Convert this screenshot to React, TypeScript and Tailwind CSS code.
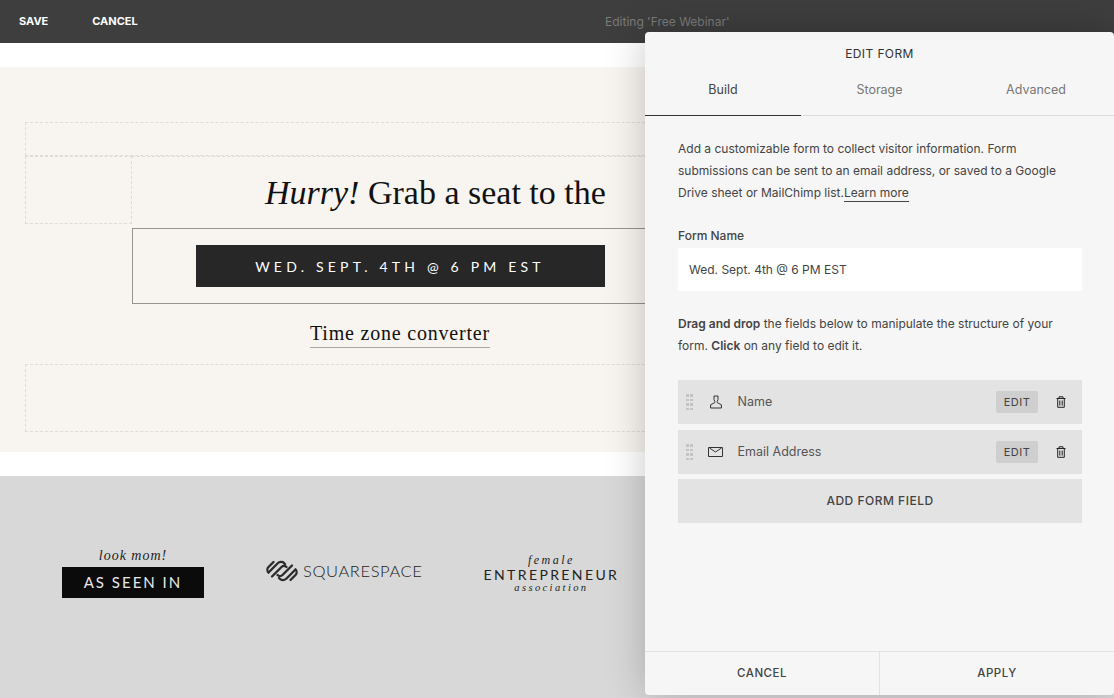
import React from "react";

const ui = "font-['Inter',sans-serif]";

const TrashIcon = () => (
  <svg width="10" height="12" viewBox="0 0 10 12" fill="none" stroke="#222" strokeWidth="1">
    <path d="M0.5 2.5H9.5M3 2.5V0.8H7V2.5M1.7 2.5V11.3H8.3V2.5M3.8 4.5V9.6M6.2 4.5V9.6" />
  </svg>
);

const UserIcon = () => (
  <svg width="12" height="14" viewBox="0 0 12 14" fill="none" stroke="#333" strokeWidth="1">
    <path d="M4 1H8V4.5L7.2 6.5V7.6L11.4 9.8V13H0.6V9.8L4.8 7.6V6.5L4 4.5Z" />
  </svg>
);

const MailIcon = () => (
  <svg width="15" height="10" viewBox="0 0 15 10" fill="none" stroke="#333" strokeWidth="1">
    <path d="M0.5 0.5H14.5V9.5H0.5ZM1.5 1L7.5 5L13.5 1" />
  </svg>
);

const DragDots = () => (
  <div className="grid grid-cols-2 gap-x-[1.5px] gap-y-[2px]">
    {Array.from({ length: 8 }).map((_, i) => (
      <span key={i} className="h-[2.5px] w-[2.5px] bg-[#c4c4c4]" />
    ))}
  </div>
);

const SquarespaceMark = () => (
  <svg width="32" height="24" viewBox="0 0 32 24" fill="none" stroke="#2b2b2b" strokeWidth="2.3" strokeLinecap="round">
    <path d="M2.5 13.5L11.5 4.5C13.5 2.5 16.5 2.5 18 4L19 5" />
    <path d="M6 17.5L15.5 8C17 6.5 19 6.5 20.5 8" />
    <path d="M2.5 13.5C1 12 1 9.5 2.5 8L7.5 3" />
    <path d="M29.5 10.5L20.5 19.5C18.5 21.5 15.5 21.5 14 20L13 19" />
    <path d="M26 6.5L16.5 16C15 17.5 13 17.5 11.5 16" />
    <path d="M29.5 10.5C31 12 31 14.5 29.5 16L24.5 21" />
  </svg>
);

const FieldRow = ({ icon, label, className }: any) => (
  <div className={`flex items-center bg-[#e3e3e3] pl-[8px] pr-[16px] ${className}`}>
    <DragDots />
    <div className="flex w-[22px] ml-[12px] justify-center">{icon}</div>
    <span className="ml-[11px] flex-1 text-[12.5px] text-[#555]">{label}</span>
    <span className="flex h-[22px] w-[42px] items-center justify-center rounded-[2px] bg-[#cfcfcf] text-[11px] tracking-[0.5px] text-[#444]">
      EDIT
    </span>
    <span className="ml-[18px] flex">
      <TrashIcon />
    </span>
  </div>
);

const EditPanel = () => (
  <div className={`absolute left-[645px] top-[32px] flex h-[663px] w-[469px] flex-col rounded-[4px] bg-[#f6f6f6] shadow-[0_0_40px_rgba(0,0,0,0.22)] ${ui}`}>
    <div className="pt-[14px] text-center text-[12px] leading-[16px] tracking-[0.4px] text-[#333]">
      EDIT FORM
    </div>
    <div className="mt-[7px] flex h-[47px] border-b border-[#dcdcdc] text-[12.5px] text-[#777]">
      <div className="-mb-px flex w-[156px] items-center justify-center border-b border-[#333] pb-[3px] text-[#444]">
        Build
      </div>
      <div className="flex w-[157px] items-center justify-center pb-[3px]">Storage</div>
      <div className="flex w-[156px] items-center justify-center pb-[3px]">Advanced</div>
    </div>

    <div className="flex-1 px-[33px] pr-[32px] pt-[22px]">
      <p className="text-[12px] leading-[22px] text-[#444]">
        Add a customizable form to collect visitor information. Form
        <br />
        submissions can be sent to an email address, or saved to a Google
        <br />
        Drive sheet or MailChimp list.
        <span className="border-b border-[#444] pb-[1px]">Learn more</span>
      </p>
      <div className="mt-[24px] text-[12px] font-medium leading-[16px] text-[#444]">Form Name</div>
      <div className="mt-[4px] flex h-[43px] items-center bg-white pl-[11px] text-[12px] text-[#444]">
        Wed. Sept. 4th @ 6 PM EST
      </div>
      <p className="mt-[22px] text-[12px] leading-[22px] text-[#444]">
        <span className="font-semibold">Drag and drop</span> the fields below to manipulate the structure of your
        <br />
        form. <span className="font-semibold">Click</span> on any field to edit it.
      </p>
      <div className="mt-[23px] flex flex-col">
        <FieldRow className="h-[44px]" icon={<UserIcon />} label="Name" />
        <FieldRow className="mt-[6px] h-[44px]" icon={<MailIcon />} label="Email Address" />
        <div className="mt-[5px] flex h-[44px] items-center justify-center bg-[#e3e3e3] text-[12px] font-medium tracking-[0.5px] text-[#444]">
          ADD FORM FIELD
        </div>
      </div>
    </div>

    <div className="flex h-[44px] border-t border-[#e2e2e2] text-[11.5px] font-medium tracking-[0.5px] text-[#444]">
      <div className="flex w-[235px] items-center justify-center border-r border-[#e2e2e2]">CANCEL</div>
      <div className="flex flex-1 items-center justify-center">APPLY</div>
    </div>
  </div>
);

const Hero = () => (
  <div className="mt-[24px] h-[385px] bg-[#f8f4ef] pl-[25px] pt-[55px] font-['Liberation_Serif',serif]">
    <div className="h-[34px] w-[700px] border border-dashed border-[#dfdcd7]" />
    <div className="flex">
      <div className="h-[68px] w-[107px] shrink-0 border border-dashed border-[#dfdcd7]" />
      <div className="h-[68px] w-[600px] whitespace-nowrap border-t border-dashed border-[#dfdcd7] pl-[133px] pt-[16px] text-[34px] leading-[40px] text-[#111]">
        <em>Hurry!</em> Grab a seat to the
      </div>
    </div>
    <div className="ml-[107px] mt-[4px] flex h-[76px] w-[536px] items-center justify-center border border-[#97938d]">
      <div className={`flex h-[42px] w-[409px] items-center justify-center bg-[#272727] font-['Lato',sans-serif] text-[14px] tracking-[4.2px] text-white`}>
        WED. SEPT. 4TH @ 6 PM EST
      </div>
    </div>
    <div className="ml-[285px] mt-[16px] w-fit border-b border-[#a9a6a1] pb-[1px] text-[20px] leading-[26px] tracking-[0.8px] text-[#111]">
      Time zone converter
    </div>
    <div className="mt-[16px] h-[68px] w-[700px] border border-dashed border-[#dfdcd7]" />
  </div>
);

const LogoStrip = () => (
  <div className="mt-[24px] flex h-[222px] items-start bg-[#d8d8d8] pl-[62px] pt-[69px]">
    <div className="flex w-[142px] flex-col items-center">
      <div className="font-['Liberation_Serif',serif] text-[14px] italic leading-[22px] tracking-[1px] text-[#222]">
        look mom!
      </div>
      <div className="flex h-[31px] w-[142px] items-center justify-center bg-[#0b0b0b] font-['Lato',sans-serif] text-[15px] tracking-[2px] text-[#e8e8e8]">
        AS SEEN IN
      </div>
    </div>
    <div className="ml-[62px] mt-[14px] flex items-center gap-[5px]">
      <SquarespaceMark />
      <span className="font-['Lato',sans-serif] text-[16.5px] font-light tracking-[0.6px] text-[#222]">SQUARESPACE</span>
    </div>
    <div className="ml-[61px] mt-[9px] flex flex-col items-center font-['Liberation_Serif',serif] text-[#222]">
      <span className="text-[12px] italic leading-[12px] tracking-[2.5px]">female</span>
      <span className="font-['Lato',sans-serif] text-[14px] leading-[17px] tracking-[2.4px]">ENTREPRENEUR</span>
      <span className="text-[10.5px] italic leading-[10px] tracking-[2.4px]">association</span>
    </div>
  </div>
);

export default function App() {
  return (
    <div className="relative h-[698px] w-[1114px] overflow-hidden bg-white">
      <div className={`relative flex h-[43px] items-center bg-[#3e3e3e] pl-[19px] text-[11px] font-bold text-white ${ui}`}>
        <span>SAVE</span>
        <span className="ml-[44px]">CANCEL</span>
        <span className="absolute left-[605px] text-[12px] font-normal text-[#7b7b7b]">Editing 'Free Webinar'</span>
      </div>
      <Hero />
      <LogoStrip />
      <EditPanel />
    </div>
  );
}
